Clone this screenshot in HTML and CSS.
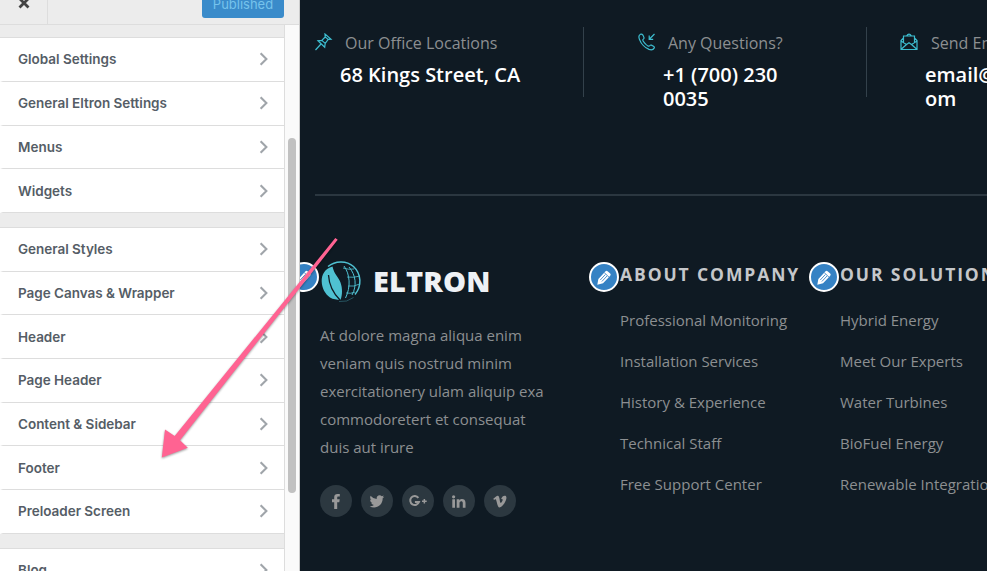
FILE: index.html
```html
<!DOCTYPE html>
<html lang="en">
<head>
<meta charset="utf-8">
<title>Customizer</title>
<link rel="stylesheet" href="styles.css">
</head>
<body>
<svg class="defs" width="0" height="0">
  <symbol id="chev" viewBox="0 0 10 14"><path d="M1.6 1.2 L7.4 7 L1.6 12.8" fill="none" stroke="#a0a5aa" stroke-width="2.1"/></symbol>
  <symbol id="edit" viewBox="0 0 30 30"><circle cx="15" cy="15" r="14" fill="#3582c4" stroke="#fff" stroke-width="2"/><g transform="translate(8.3 22.8) rotate(-47)"><path d="M0 0 L5 -3.2 H15.5 Q17 -3.2 17 -1.8 V1.8 Q17 3.2 15.5 3.2 H5 Z" fill="#fff"/><path d="M5.5 -1.1 H13 M5.5 1.1 H13 M13.6 -3.2 V3.2" stroke="#3582c4" stroke-width=".8"/></g></symbol>
</svg>
<div class="app">
  <aside class="sidebar">
    <header class="bar"><div class="close"><svg width="12" height="12" viewBox="0 0 12 12"><path d="M1.5 1.5 L10.5 10.5 M10.5 1.5 L1.5 10.5" stroke="#444" stroke-width="2.8"/></svg></div><button class="publish">Published</button></header>
    <div class="body">
      <nav class="list">
        <ul class="group">
          <li><span>Global Settings</span><svg><use href="#chev"/></svg></li>
          <li><span>General Eltron Settings</span><svg><use href="#chev"/></svg></li>
          <li><span>Menus</span><svg><use href="#chev"/></svg></li>
          <li><span>Widgets</span><svg><use href="#chev"/></svg></li>
        </ul>
        <ul class="group">
          <li><span>General Styles</span><svg><use href="#chev"/></svg></li>
          <li><span>Page Canvas &amp; Wrapper</span><svg><use href="#chev"/></svg></li>
          <li><span>Header</span><svg><use href="#chev"/></svg></li>
          <li><span>Page Header</span><svg><use href="#chev"/></svg></li>
          <li><span>Content &amp; Sidebar</span><svg><use href="#chev"/></svg></li>
          <li><span>Footer</span><svg><use href="#chev"/></svg></li>
          <li><span>Preloader Screen</span><svg><use href="#chev"/></svg></li>
        </ul>
        <ul class="group">
          <li><span>Blog</span><svg><use href="#chev"/></svg></li>
        </ul>
      </nav>
      <div class="track"><div class="thumb"></div></div>
    </div>
  </aside>
  <main class="preview">
    <section class="contacts">
      <div class="contact office">
        <div class="label"><svg width="18" height="18" viewBox="0 0 18 18"><path d="M.5 17 L6 11 M3 7.8 L9.7 14.2 L10.2 10.4 L13.2 6.4 L16 6.2 L10 1 L10.2 4 L6.8 7.4 Z M10.2 4 L13.2 6.4 M6.8 7.4 L10.2 10.4"/></svg><span>Our Office Locations</span></div>
        <div class="value">68 Kings Street, CA</div>
      </div>
      <div class="contact phone">
        <div class="label"><svg width="18" height="18" viewBox="0 0 18 18"><path d="M2.6 1.2 C.8 2 .5 4 1.5 6.5 C3 10.5 7 15 11 16.4 C13.5 17.2 15.4 16.6 16.3 14.9 Q16.6 13.9 15.5 13.2 L13.4 12.1 Q12.4 11.8 11.8 12.6 C10.8 13.8 9.8 13 8.2 11.6 C6.5 10 4.7 8 4.8 6.9 C4.9 6 6.4 6.1 6 4.6 L4.9 2.1 Q4 .8 2.6 1.2 Z M16.5 1 L11.5 6 M11.2 2.5 V6.3 H15.2"/></svg><span>Any Questions?</span></div>
        <div class="value">+1 (700) 230 0035</div>
      </div>
      <div class="contact mail">
        <div class="label"><svg width="18" height="18" viewBox="0 0 18 18"><path d="M3.5 10 V3 H14.5 V10 M6.5 3 Q9 -.6 11.5 3 M3.5 5 L1 7.5 V16.5 H17 V7.5 L14.5 5 M1 8 L6.5 11.5 L1.2 16.2 M17 8 L11.5 11.5 L16.8 16.2 M6.5 11.5 L9 9.8 L11.5 11.5"/></svg><span>Send Email</span></div>
        <div class="value">email@eltron.c<br>om</div>
      </div>
    </section>
    <section class="columns">
      <div class="about">
        <svg class="edit" width="30" height="30"><use href="#edit"/></svg>
        <div class="brand">
          <svg width="42" height="42" viewBox="0 0 42 42" fill="none" stroke="#4fc1d2">
            <path d="M12.5 5.5 C5 7.5 1.5 13.5 1.7 20.5 C1.9 27 5 33 10 36.5 C13 38.5 17 38.6 20.5 38.8 C22.5 34 22.5 27 20.5 21.5 C18.5 16 14 13 12.5 5.5 Z" fill="#4fc1d2" stroke="none"/>
            <path d="M8.5 14 C9 23 13 32 20 39" stroke="#0f1a23" stroke-width="1.3"/>
            <path d="M8 5.5 C15 0 26 -1 33.5 5.5 C41.5 13 42 25 35 33.5" stroke-width="1.5"/>
            <path d="M24 5 C30 13 31 26 25.5 37 M29 6 C36 14 37 25 32 34" stroke-width="1"/>
            <path d="M23 7 Q29 9 34 8 M27 16 Q34 17 40 15 M28 25 Q34 26 39.5 23 M26 32 Q31 33 35 31" stroke-width=".8"/>
            <path d="M19 40.5 Q27 41.5 33.5 36.5" stroke-width=".7" opacity=".5"/>
          </svg>
          <span>ELTRON</span>
        </div>
        <p>At dolore magna aliqua enim<br>veniam quis nostrud minim<br>exercitationery ulam aliquip exa<br>commodoretert et consequat<br>duis aut irure</p>
        <div class="social">
          <i><svg viewBox="0 0 32 32"><path d="M14.2 24 V17.2 H12 V14.2 H14.2 V12.2 C14.2 9.8 15.5 8.9 17.5 8.9 H19.8 V11.6 H18.3 C17.5 11.6 17.2 12 17.2 12.8 V14.2 H19.7 L19.3 17.2 H17.2 V24 Z"/></svg></i>
          <i><svg viewBox="0 0 32 32"><path d="M23.3 11.8 q-.7.9-1.6 1.5 C21.8 19 17.4 22.5 13.2 22.5 Q10.7 22.5 8.6 21.2 Q11 21.4 12.9 20 Q10.8 19.8 10.1 17.8 H11.4 Q9 17 9 14.5 L10.3 14.9 Q8.3 13.1 9.5 10.8 Q12 13.8 15.7 14 C15.1 11 18.7 9.1 20.8 11.3 L22.7 10.6 Q22.4 11.7 21.4 12.3 Z"/></svg></i>
          <i><svg viewBox="0 0 32 32"><path d="M16.4 12.8 A4.5 4.5 0 1 0 17 17 H12.9" fill="none" stroke="#999" stroke-width="2"/><path d="M20 15.5 h1.6 v-1.6 h1.5 v1.6 h1.6 v1.5 h-1.6 v1.6 h-1.5 v-1.6 H20z"/></svg></i>
          <i><svg viewBox="0 0 32 32"><circle cx="10.6" cy="11.8" r="1.6"/><path d="M9.3 14.3h2.7v8.5H9.3zM13.7 14.3h2.6v1.2c1.5-2.2 6.2-2 6.2 2.3v5h-2.7v-4.6c0-2.7-3.3-2.3-3.3 0v4.6h-2.8z"/></svg></i>
          <i><svg viewBox="0 0 32 32"><path d="M9.3 13.8 C11.1 12.4 12.7 10.7 13.8 10.8 C16 10.9 15.5 17.9 16.8 18 C17.5 18 18.8 15.5 18.7 14.8 C18.6 13.9 17.8 13.9 17 14.3 C18 11 20 10.4 21.3 10.8 C25 12.2 19 22.7 15.4 22.5 C13.3 22.3 12.6 14.5 11.7 14.2 C11.3 14 10.5 14.6 10 14.9 Z"/></svg></i>
        </div>
      </div>
      <div class="links company">
        <svg class="edit" width="30" height="30"><use href="#edit"/></svg>
        <h3>ABOUT COMPANY</h3>
        <a>Professional Monitoring</a><a>Installation Services</a><a>History &amp; Experience</a><a>Technical Staff</a><a>Free Support Center</a>
      </div>
      <div class="links solutions">
        <svg class="edit" width="30" height="30"><use href="#edit"/></svg>
        <h3>OUR SOLUTIONS</h3>
        <a>Hybrid Energy</a><a>Meet Our Experts</a><a>Water Turbines</a><a>BioFuel Energy</a><a>Renewable Integration</a>
      </div>
    </section>
  </main>
  <svg class="arrow" width="987" height="571" viewBox="0 0 987 571"><path d="M335.3 238 L337.7 239.8 L180 440.3 L187.8 447.8 L161.8 457.5 L165 429.5 L174.7 436 Z" fill="#ff6392"/></svg>
</div>
</body>
</html>
```
FILE: styles.css
```css
* { box-sizing: border-box; }
body { margin: 0; overflow: hidden; }
.defs { position: absolute; }
.app { position: relative; display: flex; width: 987px; height: 571px; overflow: hidden; font-family: "Open Sans", sans-serif; }

/* Customizer panel */
.sidebar { width: 300px; flex: none; display: flex; flex-direction: column; background: #ececec; border-right: 1px solid #ccc; font-family: Inter, "Liberation Sans", sans-serif; }
.bar { height: 25px; flex: none; display: flex; justify-content: space-between; border-bottom: 1px solid #ddd; overflow: hidden; }
.close { width: 48px; border-right: 1px solid #ddd; padding-left: 18px; }
.close svg { display: block; margin-top: -3px; }
.publish { width: 82px; height: 28px; margin: -10px 15px 0 0; padding: 0 0 1px; border: 0; border-radius: 3px; background: #3a8bca; color: #76c3ec; font: 400 13px/26px Inter, sans-serif; }
.body { flex: 1; display: flex; min-height: 0; }
.list { width: 285px; padding-top: 12.2px; border-right: 1px solid #ddd; overflow: hidden; }
.group { list-style: none; margin: 0 0 13.9px; padding: 0; border-top: 1px solid #ddd; }
.group li { height: 43.7px; display: flex; align-items: center; justify-content: space-between; padding: 0 15px; background: #fff; border-bottom: 1px solid #ddd; border-left: 3px solid #fff; color: #555d66; font-size: 13.5px; font-weight: 600; letter-spacing: -.02px; }
.group:first-child li:first-child { padding-bottom: 1px; }
.group svg { width: 10px; height: 14px; }
.track { flex: 1; background: #fafafa; padding: 113px 0 0 3px; }
.thumb { width: 8px; height: 355px; border-radius: 4px; background: #c1c1c1; }

/* Site preview */
.preview { flex: none; width: 687px; overflow: hidden; background: #0f1a23; color: #8c8f91; }
.contacts { display: flex; width: 900px; height: 196px; margin-left: 15px; padding-top: 27px; border-bottom: 2px solid #2b3740; }
.contact { height: 70px; flex: none; border-right: 1px solid #33414b; }
.office { width: 269px; }
.phone { width: 283px; padding-left: 54px; }
.mail { width: 320px; padding-left: 33px; }
.label { display: flex; align-items: center; height: 32px; font-size: 16px; gap: 12px; }
.label svg { fill: none; stroke: #3dbdd0; stroke-width: 1.2; margin-top: -2px; }
.mail .label { gap: 13px; }
.value { margin-left: 25px; width: 200px; color: #fff; font-size: 20px; line-height: 24px; font-weight: 600; margin-top: 4px; }
.phone .value { width: 125px; }
.columns { display: flex; width: 900px; padding: 66px 0 0 20px; }
.about { position: relative; width: 300px; }
.links { position: relative; width: 220px; display: flex; flex-direction: column; white-space: nowrap; }
.edit { position: absolute; left: -31px; top: 0; }
.brand { display: flex; align-items: center; gap: 11px; height: 40px; margin-top: -1px; color: #eef1f5; font-size: 29px; font-weight: 800; letter-spacing: .1px; }
.brand svg { margin-top: 1px; }
.brand span { margin-top: -1px; }
p { margin: 20px 0 24px; font-size: 15px; line-height: 28px; }
.social { display: flex; gap: 9px; }
.social i { width: 32px; height: 32px; border-radius: 50%; background: #2c3840; }
.social svg { display: block; fill: #999; }
h3 { margin: 0 0 21px; height: 25px; line-height: 25px; color: #c5c7ca; font-size: 17.5px; font-weight: 700; letter-spacing: 1.9px; }
.links a { font-size: 15px; line-height: 25px; margin-bottom: 16px; }
.arrow { position: absolute; inset: 0; filter: drop-shadow(0 1px 1px rgba(0,0,0,.4)); }
```
